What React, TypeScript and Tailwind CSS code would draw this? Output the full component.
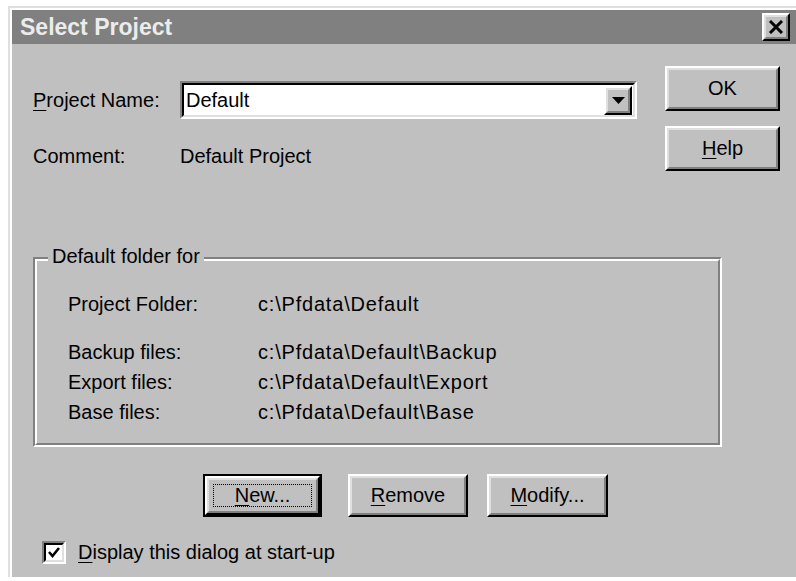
import type { ReactNode } from 'react'

const face = 'bg-[#c0c0c0]'

// Classic 3D raised bevel used by push buttons
function Bevel({ children, className = '' }: { children: ReactNode; className?: string }) {
  return (
    <div className={`border-2 border-t-white border-l-white border-r-black border-b-black ${className}`}>
      <div className={`flex h-full w-full items-center justify-center border-2 border-t-[#dfdfdf] border-l-[#dfdfdf] border-r-[#808080] border-b-[#808080] ${face}`}>
        {children}
      </div>
    </div>
  )
}

function Key({ children }: { children: string }) {
  return <span className="underline decoration-1 underline-offset-[3px]">{children}</span>
}

function PushButton({
  children,
  className = '',
  isDefault = false,
}: {
  children: ReactNode
  className?: string
  isDefault?: boolean
}) {
  if (isDefault) {
    return (
      <div className={`border-2 border-black ${className}`}>
        <Bevel className="h-full w-full">
          <div className="flex h-[calc(100%-8px)] w-[calc(100%-8px)] items-center justify-center border border-dotted border-black">
            {children}
          </div>
        </Bevel>
      </div>
    )
  }
  return <Bevel className={className}>{children}</Bevel>
}

function FolderRow({ label, path, className = '' }: { label: string; path: string; className?: string }) {
  return (
    <div className={`flex h-[30px] items-center ${className}`}>
      <span className="w-[190px]">{label}</span>
      <span className="tracking-[0.8px]">{path}</span>
    </div>
  )
}

export default function App() {
  return (
    <div className="h-[581px] w-[796px] overflow-hidden bg-white pl-2 pt-[6px] font-['Liberation_Sans',Arial,sans-serif] text-[20px] leading-[23px] text-black">
      <div className="h-[571px] border-l-2 border-t-2 border-[#dfdfdf]">
        <div className={`flex h-full flex-col border-l-2 border-t-2 border-white ${face}`}>
          {/* title bar */}
          <div className="flex h-[34px] items-center justify-between bg-[#808080] pl-2 pr-[6px]">
            <span className="text-[23px] font-bold text-[#ececec]">Select Project</span>
            <Bevel className="h-[28px] w-[28px]">
              <svg width="16" height="14" viewBox="0 0 16 14">
                <path d="M2 1 L14 13 M14 1 L2 13" stroke="black" strokeWidth="3" />
              </svg>
            </Bevel>
          </div>

          <div className="flex flex-1 flex-col pl-[21px]">
            <div className="flex">
              <div className="flex flex-col pt-[37px]">
                <div className="flex h-[38px] items-center">
                  <span className="w-[147px]">
                    <Key>P</Key>roject Name:
                  </span>
                  <div className="h-[38px] w-[457px] border-2 border-t-[#808080] border-l-[#808080] border-r-white border-b-white">
                    <div className="flex h-full items-center border-2 border-t-black border-l-black border-r-[#dfdfdf] border-b-[#dfdfdf] bg-white pl-[2px] pr-[1px]">
                      <span className="flex-1">Default</span>
                      <Bevel className="h-[29px] w-[28px]">
                        <svg width="13" height="7" viewBox="0 0 13 7">
                          <path d="M0 0 H13 L6.5 7 Z" fill="black" />
                        </svg>
                      </Bevel>
                    </div>
                  </div>
                </div>
                <div className="mt-[26px] flex">
                  <span className="w-[147px]">Comment:</span>
                  <span>Default Project</span>
                </div>
              </div>

              <div className="ml-[28px] flex flex-col gap-[15px] pt-[22px]">
                <PushButton className="h-[45px] w-[115px]">OK</PushButton>
                <PushButton className="h-[45px] w-[115px]">
                  <span>
                    <Key>H</Key>elp
                  </span>
                </PushButton>
              </div>
            </div>

            {/* Default folder for group */}
            <div className="relative mt-[86px] h-[190px] w-[689px] border-2 border-t-[#808080] border-l-[#808080] border-r-white border-b-white">
              <div className="h-full border-2 border-t-white border-l-white border-r-[#808080] border-b-[#808080] pl-[31px] pt-[28px]">
                <FolderRow label="Project Folder:" path="c:\Pfdata\Default" />
                <FolderRow className="mt-[18px]" label="Backup files:" path="c:\Pfdata\Default\Backup" />
                <FolderRow label="Export files:" path="c:\Pfdata\Default\Export" />
                <FolderRow label="Base files:" path="c:\Pfdata\Default\Base" />
              </div>
              <span className={`absolute left-[13px] top-[-14px] px-[4px] ${face}`}>Default folder for</span>
            </div>

            <div className="ml-[170px] mt-[27px] flex">
              <PushButton isDefault className="h-[43px] w-[119px]">
                <span>
                  <Key>N</Key>ew...
                </span>
              </PushButton>
              <PushButton className="ml-[26px] h-[43px] w-[120px]">
                <span>
                  <Key>R</Key>emove
                </span>
              </PushButton>
              <PushButton className="ml-[19px] h-[43px] w-[121px]">
                <span>
                  <Key>M</Key>odify...
                </span>
              </PushButton>
            </div>

            <div className="ml-[9px] mt-[24px] flex items-center">
              <div className="h-[23px] w-[24px] border-2 border-t-[#808080] border-l-[#808080] border-r-white border-b-white">
                <div className="flex h-full items-center justify-center border-2 border-t-black border-l-black border-r-[#dfdfdf] border-b-[#dfdfdf] bg-white">
                  <svg width="12" height="11" viewBox="0 0 12 11">
                    <path d="M1 5 L4.5 9 L11 1" stroke="black" strokeWidth="2.6" fill="none" />
                  </svg>
                </div>
              </div>
              <span className="ml-[12px]">
                <Key>D</Key>isplay this dialog at start-up
              </span>
            </div>
          </div>
        </div>
      </div>
    </div>
  )
}
